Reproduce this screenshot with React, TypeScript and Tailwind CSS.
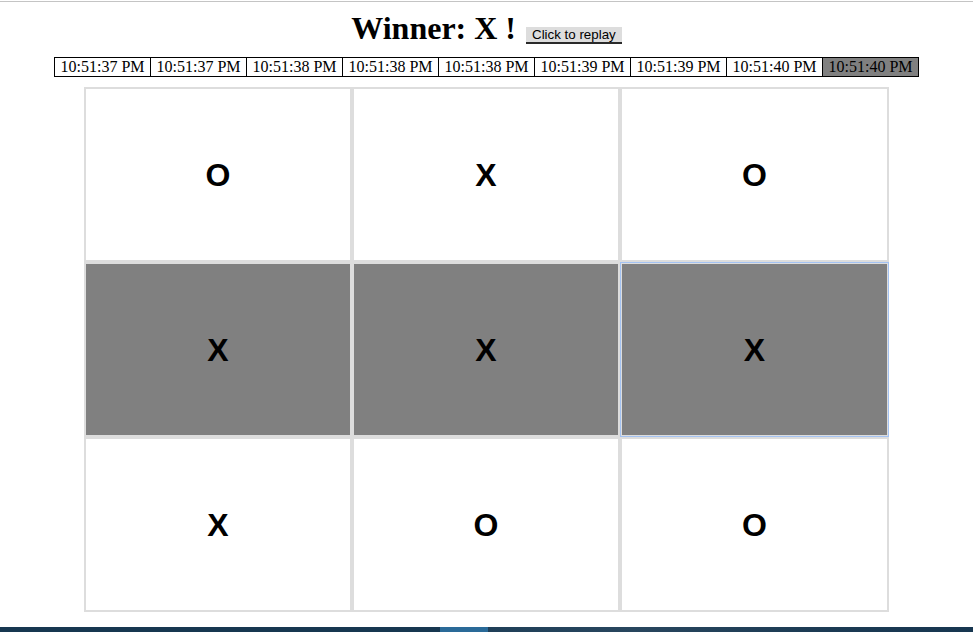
import React from "react";

const times = [
  "10:51:37 PM",
  "10:51:37 PM",
  "10:51:38 PM",
  "10:51:38 PM",
  "10:51:38 PM",
  "10:51:39 PM",
  "10:51:39 PM",
  "10:51:40 PM",
  "10:51:40 PM",
];

const board = ["O", "X", "O", "X", "X", "X", "X", "O", "O"];
const winning = [3, 4, 5];

export default function App() {
  return (
    <div className="h-[632px] w-[973px] overflow-hidden bg-white flex flex-col">
      <div className="mt-px h-px w-full bg-[#c4c4c4]" />
      <div className="mt-[8px] flex items-baseline justify-center">
        <h1
          className="text-[32px] leading-[36px] font-bold text-black"
          style={{ fontFamily: '"Liberation Serif", "Times New Roman", serif' }}
        >
          Winner: X !
        </h1>
        <button
          className="ml-[10px] bg-[#dddddd] border-0 border-b-2 border-[#2a2a2a] px-[6px] py-0 text-[13.33px] leading-[15px] text-black"
          style={{ fontFamily: '"Liberation Sans", Arial, sans-serif' }}
        >
          Click to replay
        </button>
      </div>
      <div className="mt-[11px] flex justify-center">
        <div
          className="flex border-r border-black"
          style={{ fontFamily: '"Liberation Serif", "Times New Roman", serif' }}
        >
          {times.map((t, i) => (
            <div
              key={i}
              className={`w-[96px] h-[20px] border-l border-y border-black text-[16px] leading-[18px] text-black text-center ${
                i === times.length - 1 ? "bg-[#808080]" : "bg-white"
              }`}
            >
              {t}
            </div>
          ))}
        </div>
      </div>
      <div className="mt-[10px] flex justify-center">
        <div className="grid grid-cols-[268px_268px_269px] grid-rows-[175px_175px_175px]">
          {board.map((v, i) => {
            const win = winning.includes(i);
            const focused = i === 5;
            return (
              <div
                key={i}
                className={`flex items-center justify-center border-2 border-[#dddddd] text-[32px] font-bold text-black ${
                  win ? "bg-[#808080]" : "bg-white"
                } ${focused ? "outline-1 outline-solid outline-[#a3c2f2] -outline-offset-1" : ""}`}
                style={{ fontFamily: '"Liberation Sans", Arial, sans-serif' }}
              >
                {v}
              </div>
            );
          })}
        </div>
      </div>
      <div className="mt-auto h-[5px] w-full flex">
        <div className="w-[440px] bg-[#173750]" />
        <div className="w-[48px] bg-[#2a6a98]" />
        <div className="flex-1 bg-[linear-gradient(90deg,#1f3f58,#28465e_30%,#1b3a53_70%,#173650)]" />
      </div>
    </div>
  );
}
